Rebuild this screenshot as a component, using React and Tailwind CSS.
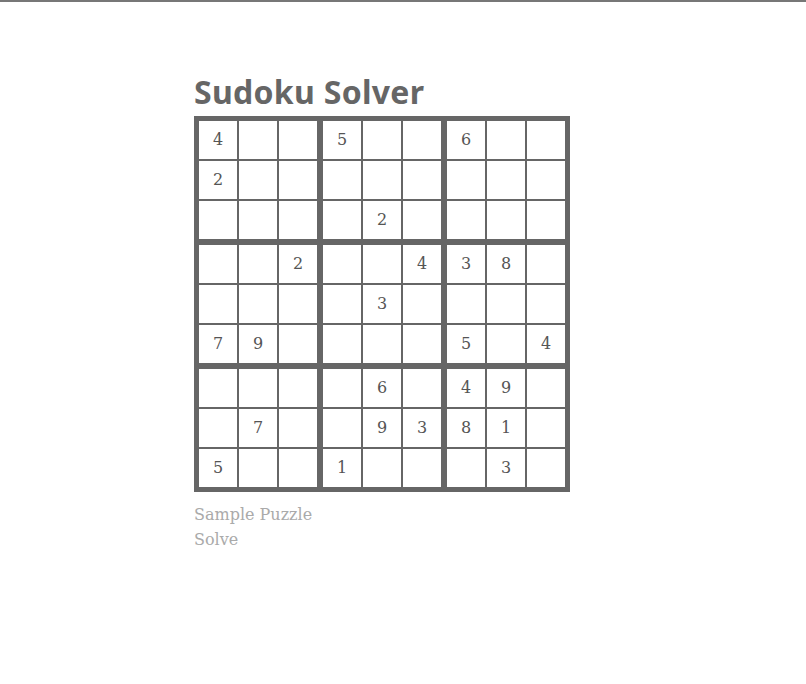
import React from "react";

const puzzle = [
  "4..5..6..",
  "2........",
  "....2....",
  "..2..438.",
  "....3....",
  "79....5.4",
  "....6.49.",
  ".7..9381.",
  "5..1...3.",
];

const serif = '"DejaVu Serif", "Liberation Serif", serif';

function Box({ br, bc }) {
  const cells = [];
  for (let r = 0; r < 3; r++) {
    for (let c = 0; c < 3; c++) {
      const v = puzzle[br * 3 + r][bc * 3 + c];
      cells.push(
        <div
          key={`${r}-${c}`}
          className="bg-white flex items-center justify-center text-[16px] text-[#555]"
          style={{ fontFamily: serif }}
        >
          {v === "." ? "" : v}
        </div>
      );
    }
  }
  return (
    <div className="grid grid-cols-[38px_38px_38px] grid-rows-[38px_38px_38px] gap-[2px]">
      {cells}
    </div>
  );
}

export default function App() {
  const boxes = [];
  for (let br = 0; br < 3; br++) {
    for (let bc = 0; bc < 3; bc++) {
      boxes.push(<Box key={`${br}${bc}`} br={br} bc={bc} />);
    }
  }

  return (
    <div className="min-h-[684px] bg-white border-t-2 border-[#777]">
      <div className="w-[418px] mx-auto pt-[70px]">
        <h1
          className="text-[32px] font-bold text-[#666] leading-[40px] tracking-[0.3px]"
          style={{ fontFamily: '"Noto Sans", "Open Sans", sans-serif' }}
        >
          Sudoku Solver
        </h1>
        <div className="mt-[4px] inline-grid grid-cols-3 gap-[6px] bg-[#666] p-[5px]">
          {boxes}
        </div>
        <div
          className="mt-[10px] text-[16px] leading-[25px] text-[#aaa]"
          style={{ fontFamily: serif }}
        >
          <p>Sample Puzzle</p>
          <p>Solve</p>
        </div>
      </div>
    </div>
  );
}
